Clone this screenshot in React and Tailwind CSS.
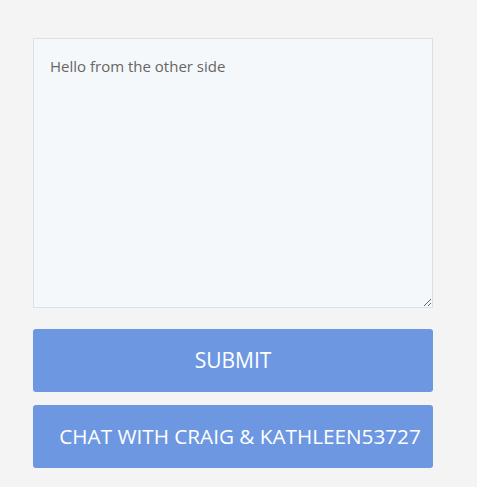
import React from 'react';

export default function App() {
    return (
        <div className="min-h-screen w-full bg-[#f4f4f4] pt-[38px] pl-[33px]" style={{ fontFamily: '"Open Sans", "Liberation Sans", sans-serif' }}>
            <div className="flex w-[400px] flex-col">
                <textarea
                    className="h-[270px] w-full resize-y border border-[#d9e1e7] bg-[#f5f8fa] px-[16px] py-[16px] text-[15px] leading-[22px] text-[#666666] outline-none"
                    defaultValue="Hello from the other side"
                />
                <button className="mt-[21px] flex h-[63px] w-full items-center justify-center rounded-[3px] bg-[#6d98e1] text-[21px] uppercase text-white">
                    Submit
                </button>
                <button className="mt-[13px] flex h-[63px] w-full items-center justify-center whitespace-nowrap rounded-[3px] bg-[#6d98e1] pl-[14px] text-[20.7px] uppercase text-white">
                    Chat with Craig &amp; Kathleen53727
                </button>
            </div>
        </div>
    );
}
